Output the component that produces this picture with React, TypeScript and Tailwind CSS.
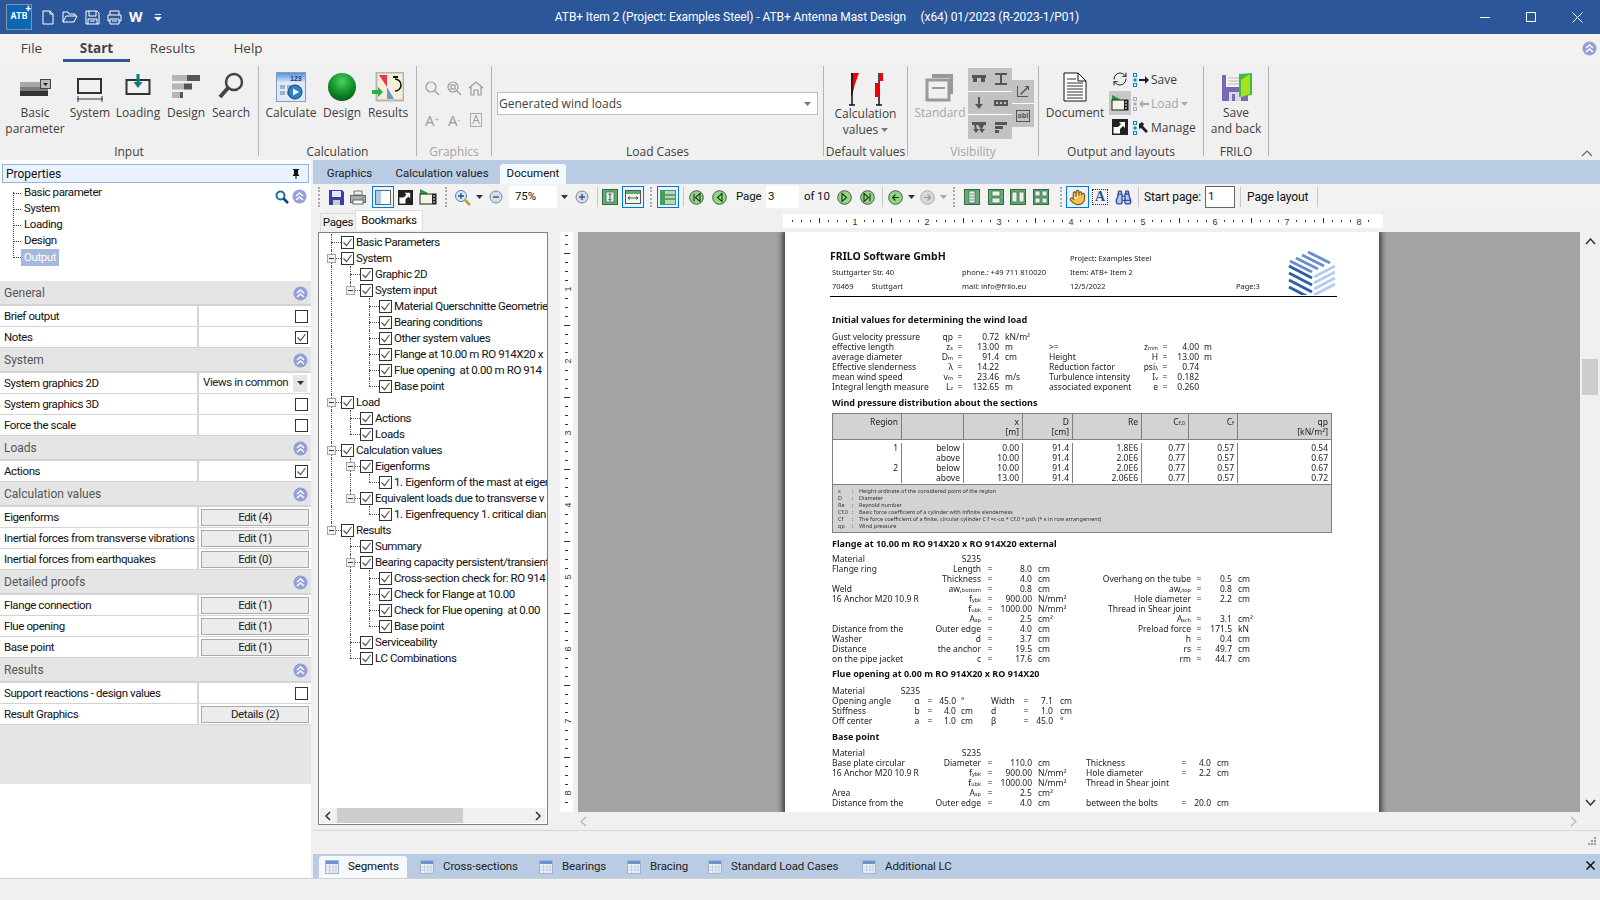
import type { ReactNode } from 'react'
import { Binoculars, Hand, RefreshCw } from 'lucide-react'

const ui = "font-['Roboto',sans-serif]"
const narrow = 'text-[11.5px] tracking-[-0.4px]'
const barText = 'text-[11.5px] tracking-[-0.1px]'

// ---------- small shared bits ----------

function Chevrons({ className = '' }: { className?: string }) {
  return (
    <svg width="15" height="15" viewBox="0 0 15 15" className={className}>
      <circle cx="7.5" cy="7.5" r="7" fill="#93a0d8" />
      <path d="M4 7l3.5-3L11 7M4 11l3.5-3L11 11" fill="none" stroke="#fff" strokeWidth="1.5" />
    </svg>
  )
}

function Check({ on = true }: { on?: boolean }) {
  return (
    <span className="flex h-[13px] w-[13px] shrink-0 items-center justify-center border border-[#333] bg-white">
      {on && (
        <svg width="11" height="11" viewBox="0 0 11 11">
          <path d="M1.5 5.5L4.5 8.5L9.5 2" fill="none" stroke="#555" strokeWidth="1.2" />
        </svg>
      )}
    </span>
  )
}

function Caret({ color = '#333' }: { color?: string }) {
  return (
    <svg width="7" height="4" viewBox="0 0 7 4">
      <path d="M0 0h7L3.5 4z" fill={color} />
    </svg>
  )
}

// ---------- ribbon icons ----------

function BasicIcon() {
  return (
    <svg width="31" height="18" viewBox="0 0 31 18" className="mb-[5px]">
      <rect x="0" y="3" width="28" height="5" fill="#a8a8a8" />
      <rect x="0" y="8" width="28" height="4" fill="#7c7c7c" />
      <rect x="0" y="12" width="28" height="5" fill="#333" />
      <rect x="20.500" y="0.500" width="10" height="9" fill="#bbb" stroke="#444" />
      <path d="M23 4h5l-2.500 3z" fill="#222" />
    </svg>
  )
}

function SystemIcon() {
  return (
    <svg width="28" height="26" viewBox="0 0 28 26">
      <rect x="2" y="3" width="23" height="14" fill="none" stroke="#333" strokeWidth="2" />
      <path d="M1 23h26M2 20v6M26 20v6" stroke="#333" fill="none" />
    </svg>
  )
}

function LoadingIcon() {
  return (
    <svg width="26" height="22" viewBox="0 0 26 22" className="mb-[7px]">
      <rect x="1.500" y="7" width="23" height="14" fill="none" stroke="#333" strokeWidth="2" />
      <path d="M11.500 1h3v8h3L13 15l-4.500-6h3z" fill="#0d7c7c" />
    </svg>
  )
}

function DesignBars() {
  return (
    <svg width="30" height="25" viewBox="0 0 30 25" className="mb-[3px]">
      <rect x="1" y="1" width="15" height="6" fill="#b5b5b5" />
      <rect x="16" y="1" width="13" height="6" fill="#555" />
      <rect x="1" y="9.500" width="12" height="6" fill="#b5b5b5" />
      <rect x="13" y="9.500" width="8" height="6" fill="#555" />
      <rect x="1" y="18" width="8" height="6" fill="#b5b5b5" />
      <rect x="9" y="18" width="3" height="6" fill="#555" />
    </svg>
  )
}

function SearchIcon() {
  return (
    <svg width="28" height="28" viewBox="0 0 28 28" className="mb-[2px]">
      <circle cx="17" cy="10" r="8" fill="none" stroke="#444" strokeWidth="2.500" />
      <path d="M11 16L3 25" stroke="#444" strokeWidth="4" />
    </svg>
  )
}

function CalcIcon() {
  return (
    <svg width="30" height="30" viewBox="0 0 30 30">
      <defs>
        <linearGradient id="calcTop" x1="0" x2="0" y1="0" y2="1">
          <stop offset="0" stopColor="#5a8fd8" />
          <stop offset="1" stopColor="#cfe2f8" />
        </linearGradient>
      </defs>
      <rect x="0.500" y="0.500" width="29" height="29" fill="#dfe9f6" stroke="#7f9fc9" />
      <rect x="1" y="1" width="28" height="9" fill="url(#calcTop)" />
      <text x="14" y="9" fontSize="7" fontFamily="Liberation Sans" fontWeight="700" fill="#1d3f7a">123</text>
      <path d="M4 13h5v4H4zM11 13h5v4h-5zM4 19h5v4H4zM11 19h5v4h-5z" fill="#9db0c6" />
      <path d="M18 13h5v3h-5z" fill="#e8b874" />
      <circle cx="19" cy="20" r="7" fill="#2f80c8" stroke="#123f7a" />
      <path d="M17 16.500l6 3.500-6 3.500z" fill="#fff" />
    </svg>
  )
}

function SphereIcon() {
  return (
    <svg width="30" height="30" viewBox="0 0 30 30">
      <defs>
        <radialGradient id="sphere" cx="0.500" cy="0.300" r="0.700">
          <stop offset="0" stopColor="#4fd05c" />
          <stop offset="0.600" stopColor="#12912a" />
          <stop offset="1" stopColor="#075f17" />
        </radialGradient>
      </defs>
      <circle cx="15" cy="15" r="14" fill="url(#sphere)" />
    </svg>
  )
}

function ResultsIcon() {
  return (
    <svg width="32" height="30" viewBox="0 0 32 30">
      <rect x="4.500" y="0.500" width="27" height="28" fill="#f5eed8" stroke="#b5b5b5" strokeWidth="2" />
      <path d="M7 3h8v12z" fill="#e8394a" />
      <path d="M15 15l7 12h-7z" fill="#6d97cc" />
      <path d="M23 7a6 6 0 0 1 0 12" fill="none" stroke="#111" strokeWidth="1.500" />
      <path d="M21 4h5v2h-5z" fill="#111" />
      <path d="M0 18h6v-3l5 5-5 5v-3H0z" fill="#27b14b" />
    </svg>
  )
}

function FlagsIcon() {
  return (
    <svg width="36" height="34" viewBox="0 0 36 34">
      <path d="M3 1h8L7 12 4 24H3z" fill="#f0000a" />
      <path d="M4 1v32M1 33h6M31 1v32M28 33h6" stroke="#111" strokeWidth="1.500" fill="none" />
      <rect x="31" y="1" width="4" height="8" fill="#f0000a" />
      <rect x="27" y="11" width="4" height="14" fill="#f0000a" />
    </svg>
  )
}

function StandardIcon() {
  return (
    <svg width="30" height="30" viewBox="0 0 30 30">
      <path d="M7 2h21v20h-3V6H7z" fill="#999" />
      <rect x="2" y="8" width="22" height="20" fill="none" stroke="#999" strokeWidth="3" />
      <path d="M7 16h13" stroke="#999" strokeWidth="2" />
    </svg>
  )
}

function DocumentIcon() {
  return (
    <svg width="24" height="30" viewBox="0 0 24 30">
      <path d="M1 1h14l8 8v20H1z" fill="#fff" stroke="#111" />
      <path d="M15 1v8h8" fill="none" stroke="#111" />
      <path d="M4 7h9M4 11h16M4 14h16M4 17h16M4 20h16M4 23h16M4 26h16" stroke="#333" />
    </svg>
  )
}

function SaveBackIcon() {
  return (
    <svg width="32" height="30" viewBox="0 0 32 30">
      <path d="M2 3h26v26H2z" fill="#7b68b5" />
      <rect x="6" y="3" width="18" height="12" fill="#f2f2f2" />
      <path d="M8 6h14M8 9h14M8 12h14" stroke="#bbb" />
      <rect x="9" y="20" width="12" height="9" fill="#d9d9d9" />
      <rect x="12" y="22" width="3" height="7" fill="#7b68b5" />
      <path d="M19 2l13-1v22l-13 2z" fill="#3dbb4a" />
      <path d="M21 8l9-6v20l-9 3z" fill="#a9e21c" />
    </svg>
  )
}

function MiniGray({ kind }: { kind: string }) {
  const paths: Record<string, ReactNode> = {
    zoom: (
      <>
        <circle cx="7" cy="7" r="5" fill="none" />
        <path d="M11 11l4 4" />
      </>
    ),
    zoomBox: (
      <>
        <circle cx="7" cy="7" r="5" fill="none" />
        <rect x="5" y="5" width="4" height="4" fill="none" />
        <path d="M11 11l4 4" />
      </>
    ),
    home: <path d="M1 8l7-6 7 6M3 7v8h3v-5h4v5h3V7" fill="none" />,
  }
  return (
    <svg width="16" height="16" viewBox="0 0 16 16" stroke="#9a9a9a" strokeWidth="1.200">
      {paths[kind]}
    </svg>
  )
}

function ArrowList({ dir }: { dir: 'save' | 'load' | 'manage' }) {
  const dim = dir === 'load'
  return (
    <svg width="16" height="14" viewBox="0 0 16 14">
      <rect x="0.500" y="0.500" width="3" height="3" fill="none" stroke={dim ? '#aaa' : '#1784c4'} />
      <rect x="0.500" y="5.500" width="3" height="3" fill={dim ? '#aaa' : '#1784c4'} />
      <rect x="0.500" y="10.500" width="3" height="3" fill="none" stroke={dim ? '#aaa' : '#1784c4'} />
      {dir === 'save' && <path d="M6 6h6V3l4 4-4 4V8H6z" fill="#222" />}
      {dir === 'load' && <path d="M16 6h-6V3L6 7l4 4V8h6z" fill="#aaa" />}
      {dir === 'manage' && <path d="M6 3l3-2 2 2-1 2 5 5-2 2-5-5-2 1z" fill="#222" />}
    </svg>
  )
}

function ExpandBox({ size = 16 }: { size?: number }) {
  return (
    <svg width={size} height={size} viewBox="0 0 16 16">
      <rect width="16" height="16" fill="#222" />
      <rect x="1.500" y="8" width="6.500" height="6.500" fill="#fff" />
      <path d="M7 3h6v6l-2-2-3 3-2-2 3-3z" fill="#fff" />
    </svg>
  )
}

function FilmIcon() {
  return (
    <svg width="18" height="16" viewBox="0 0 18 16">
      <path d="M1 0l8 4-8 4z" fill="#1d9a3c" />
      <rect x="1" y="5" width="16" height="10" fill="#f4f4e4" stroke="#222" />
      <rect x="13" y="5" width="4" height="10" fill="#222" />
      <path d="M14 7h2M14 10h2M14 13h2" stroke="#fff" />
    </svg>
  )
}

function VisIcon({ d }: { d: string }) {
  return (
    <svg width="16" height="14" viewBox="0 0 16 14">
      <path d={d} fill="#555" />
    </svg>
  )
}

// ---------- ribbon ----------

function BigBtn({ icon, label, className, dim }: { icon: ReactNode; label: ReactNode; className: string; dim?: boolean }) {
  return (
    <div className={`flex flex-col items-center ${className}`}>
      <div className="flex h-[32px] shrink-0 items-end justify-center">{icon}</div>
      <div className={`mt-[3px] shrink-0 text-center text-[12px] leading-[16px] ${dim ? 'text-[#a6a6a6]' : 'text-[#404040]'}`}>{label}</div>
    </div>
  )
}

function Group({ title, className, children, dim }: { title: string; className: string; children: ReactNode; dim?: boolean }) {
  return (
    <div className={`flex h-full shrink-0 flex-col border-r border-[#b5b5b5] ${className}`}>
      <div className="flex min-h-0 flex-1 pt-[4px]">{children}</div>
      <div className={`h-[10px] shrink-0 text-center text-[12px] leading-[12px] whitespace-nowrap ${dim ? 'text-[#a6a6a6]' : 'text-[#404040]'}`}>{title}</div>
    </div>
  )
}

function Ribbon() {
  return (
    <div className="relative flex h-[98px] shrink-0 items-stretch bg-[#f0f0f0] pt-[4px] pb-[4px] font-['Open_Sans',sans-serif]">
      <Group title="Input" className="w-[259px]">
        <BigBtn className="w-[70px]" icon={<BasicIcon />} label={<>Basic<br />parameter</>} />
        <BigBtn className="w-[40px]" icon={<SystemIcon />} label="System" />
        <BigBtn className="w-[56px]" icon={<LoadingIcon />} label="Loading" />
        <BigBtn className="w-[40px]" icon={<DesignBars />} label="Design" />
        <BigBtn className="w-[50px]" icon={<SearchIcon />} label="Search" />
      </Group>
      <Group title="Calculation" className="w-[158px]">
        <BigBtn className="w-[64px]" icon={<CalcIcon />} label="Calculate" />
        <BigBtn className="w-[38px]" icon={<SphereIcon />} label="Design" />
        <BigBtn className="w-[54px]" icon={<ResultsIcon />} label="Results" />
      </Group>
      <Group title="Graphics" dim className="w-[75px]">
        <div className="mx-auto mt-[2px] grid h-[64px] w-[66px] grid-cols-3 items-center justify-items-center text-[15px] leading-none text-[#9a9a9a]">
          <MiniGray kind="zoom" />
          <MiniGray kind="zoomBox" />
          <MiniGray kind="home" />
          <span>A<sup className="text-[8px]">+</sup></span>
          <span>A<sup className="text-[8px]">-</sup></span>
          <span className="border border-[#aaa] px-[1px] text-[12px]">A</span>
        </div>
      </Group>
      <Group title="Load Cases" className="w-[332px]">
        <div className="mx-[5px] mt-[22px] flex h-[23px] w-[321px] items-center justify-between border border-[#bdbdbd] bg-white pr-[6px] pl-[1px] text-[12px] text-[#404040]">
          Generated wind loads
          <Caret color="#777" />
        </div>
      </Group>
      <Group title="Default values" className="w-[84px]">
        <div className="flex w-full flex-col items-center">
          <div className="flex h-[36px] shrink-0 items-start pt-[2px]">
            <FlagsIcon />
          </div>
          <div className="shrink-0 text-center text-[12px] leading-[16px] text-[#404040]">
            Calculation
            <br />
            <span className="inline-flex items-center gap-[3px]">
              values <Caret color="#777" />
            </span>
          </div>
        </div>
      </Group>
      <Group title="Visibility" dim className="w-[131px]">
        <BigBtn className="ml-[4px] w-[56px]" dim icon={<StandardIcon />} label="Standard" />
        <div className="-mt-[2px] flex items-start">
          <div className="grid h-[71px] w-[44px] grid-cols-2 grid-rows-3 divide-y divide-white bg-[#c2c2c2]">
            <div className="col-span-2 flex items-center justify-around">
              <VisIcon d="M1 3h14v3H1zM2 6h4v4H2zM10 6h4v4h-4z" />
              <VisIcon d="M2 1h12v2h-5v8h5v2H2v-2h5V3H2z" />
            </div>
            <div className="col-span-2 flex items-center justify-around">
              <VisIcon d="M7 1h2v7h3l-4 5-4-5h3z" />
              <VisIcon d="M1 4h14v6H1zM3 6v2h2V6zM7 6v2h2V6zM11 6v2h2V6z" />
            </div>
            <div className="col-span-2 flex items-center justify-around">
              <VisIcon d="M1 2h14v3h-2l-2 4 3 0-3 4-3-4h2L7 5H5l1 4h2l-3 4-3-4h2L3 5H1z" />
              <VisIcon d="M2 2h12v3H2zM2 6h8v3H2zM2 10h4v3H2z" />
            </div>
          </div>
          <div className="mt-[12px] flex h-[47px] w-[22px] flex-col divide-y divide-white bg-[#c2c2c2]">
            <div className="flex flex-1 items-center justify-center">
              <VisIcon d="M2 1h1v10h10v1H2zM5 9l8-8 1 1-8 8zM10 1h4v4h-1V2h-3z" />
            </div>
            <div className="flex flex-1 items-center justify-center">
              <span className="border border-[#555] px-[1px] text-[7px] leading-[10px] font-bold text-[#555]">abl</span>
            </div>
          </div>
        </div>
      </Group>
      <Group title="Output and layouts" className="w-[165px]">
        <BigBtn className="ml-[2px] w-[68px]" icon={<DocumentIcon />} label="Document" />
        <div className="-mt-[3px] flex w-[22px] flex-col items-center">
          <div className="flex h-[24px] items-center justify-center">
            <RefreshCw size={16} color="#222" strokeWidth={1.5} />
          </div>
          <div className="flex h-[24px] w-[22px] items-center justify-center bg-[#c8c8c8]">
            <FilmIcon />
          </div>
          <div className="flex h-[24px] items-center justify-center">
            <ExpandBox />
          </div>
        </div>
        <div className="-mt-[2px] ml-[2px] flex flex-col text-[12px] text-[#404040]">
          <div className="flex h-[24px] items-center gap-[2px]">
            <ArrowList dir="save" /> Save
          </div>
          <div className="flex h-[24px] items-center gap-[2px] text-[#a6a6a6]">
            <ArrowList dir="load" /> Load <Caret color="#aaa" />
          </div>
          <div className="flex h-[24px] items-center gap-[2px]">
            <ArrowList dir="manage" /> Manage
          </div>
        </div>
      </Group>
      <Group title="FRILO" className="w-[65px]">
        <BigBtn className="w-full" icon={<SaveBackIcon />} label={<>Save<br />and back</>} />
      </Group>
      <svg width="12" height="7" viewBox="0 0 12 7" className="absolute right-[7px] bottom-[3px]">
        <path d="M1 6l5-5 5 5" fill="none" stroke="#666" strokeWidth="1.200" />
      </svg>
    </div>
  )
}

// ---------- title and menu ----------

function TitleBar() {
  return (
    <div className="flex h-[34px] shrink-0 items-center bg-[#2b579a] text-white">
      <div className="flex w-[164px] shrink-0 items-center">
        <div className="relative ml-[6px] flex h-[26px] w-[26px] items-start justify-center border border-[#8a9099] bg-[#0b66b5] pt-[7px] font-['Roboto',sans-serif] text-[9px] leading-none font-bold">
          ATB
          <span className="absolute top-[-1px] right-[0px] text-[10px] leading-none">+</span>
        </div>
        <svg width="12" height="15" viewBox="0 0 12 15" className="ml-[10px]" fill="none" stroke="#fff">
          <path d="M1 1h7l3 3v10H1zM8 1v3h3" />
        </svg>
        <svg width="16" height="12" viewBox="0 0 16 12" className="ml-[8px]" fill="none" stroke="#fff">
          <path d="M1 11V1h5l1 2h6v2M1 11l3-6h11l-3 6z" />
        </svg>
        <svg width="15" height="15" viewBox="0 0 15 15" className="ml-[7px]" fill="none" stroke="#fff">
          <path d="M1 1h11l2 2v11H1zM4 1v5h7V1M3 14V9h9v5M5 11h5" />
        </svg>
        <svg width="15" height="15" viewBox="0 0 15 15" className="ml-[7px]" fill="none" stroke="#fff">
          <path d="M3 5V1h9v4M3 11H1V5h13v6h-2M3 9h9v5H3zM5 11h5" />
        </svg>
        <span className="ml-[7px] font-['Open_Sans',sans-serif] text-[14px] leading-none font-bold">W</span>
        <svg width="8" height="7" viewBox="0 0 8 7" className="ml-[11px]" fill="#fff">
          <path d="M1 0h6v1H1zM0 3h8L4 7z" />
        </svg>
      </div>
      <div className="min-w-0 flex-1 pl-[8px] text-center font-['Roboto',sans-serif] text-[12px] tracking-[-0.09px] whitespace-pre">
        ATB+ Item 2 (Project: Examples Steel) - ATB+ Antenna Mast Design     (x64) 01/2023 (R-2023-1/P01)
      </div>
      <div className="flex w-[138px] shrink-0 items-center text-white">
        <div className="flex w-[46px] justify-center">
          <span className="h-px w-[10px] bg-white" />
        </div>
        <div className="flex w-[46px] justify-center">
          <span className="h-[10px] w-[10px] border border-white" />
        </div>
        <div className="flex w-[46px] justify-center">
          <svg width="11" height="11" viewBox="0 0 11 11">
            <path d="M0.500 0.500l10 10M10.500 0.500l-10 10" stroke="#fff" />
          </svg>
        </div>
      </div>
    </div>
  )
}

function MenuBar() {
  return (
    <div className="flex h-[28px] shrink-0 items-center bg-[#f3f2f1] font-['Open_Sans',sans-serif] text-[13.5px] text-[#444]">
      <div className="flex h-full w-[63px] items-center justify-center">File</div>
      <div className="flex h-full w-[67px] items-center justify-center border-b-[3px] border-[#2b579a] pt-[3px] font-bold text-[#444]">Start</div>
      <div className="flex h-full w-[85px] items-center justify-center">Results</div>
      <div className="flex h-full w-[66px] items-center justify-center">Help</div>
      <Chevrons className="mr-[3px] ml-auto" />
    </div>
  )
}

// ---------- left property panel ----------

function PropHeader({ title }: { title: string }) {
  return (
    <div className="flex h-[25px] items-center justify-between border-b-2 border-[#d4d4d4] bg-[#e5e5e5] pt-[1px] pr-[3px] pl-[4px] text-[12px] text-[#555]">
      {title}
      <Chevrons />
    </div>
  )
}

function PropRow({ label, children }: { label: string; children?: ReactNode }) {
  return (
    <div className="flex h-[21px] border-b border-[#d4d4d4] bg-white text-[#111]">
      <div className={`flex w-[199px] shrink-0 items-center overflow-hidden border-r-2 border-[#d4d4d4] pt-[1px] pl-[4px] whitespace-nowrap ${narrow}`}>{label}</div>
      <div className="flex min-w-0 flex-1 items-center justify-end">{children}</div>
    </div>
  )
}

function EditBtn({ label }: { label: string }) {
  return (
    <div className={`mr-[2px] flex h-[17px] w-[108px] items-center justify-center border border-[#a9a9a9] bg-[#ececec] pt-[1px] text-[#222] ${narrow}`}>{label}</div>
  )
}

function CheckCell({ on }: { on?: boolean }) {
  return (
    <div className="mr-[3px]">
      <Check on={!!on} />
    </div>
  )
}

function PropertiesPanel() {
  const nav = ['Basic parameter', 'System', 'Loading', 'Design', 'Output']
  return (
    <div className={`flex w-[311px] shrink-0 flex-col bg-white ${ui}`}>
      <div className="px-[2px] pt-[4px]">
        <div className="flex h-[19px] items-center justify-between border border-[#8fb4e0] bg-[#eaf3fd] pr-[8px] pl-[3px] text-[12px] text-[#111]">
          Properties
          <svg width="8" height="10" viewBox="0 0 8 10">
            <path d="M1 0h6v1H6v4l1 1v1H4.500v3h-1V7H1V6l1-1V1H1z" fill="#111" />
          </svg>
        </div>
      </div>
      <div className={`relative h-[98px] pt-[2px] text-[#111] ${narrow}`}>
        <div className="absolute top-[9px] left-[13px] h-[66px] border-l border-dotted border-[#444]" />
        {nav.map((n) => (
          <div key={n} className="flex h-[16px] items-center pl-[13px]">
            <span className="w-[8px] border-t border-dotted border-[#444]" />
            {n === 'Output' ? (
              <span className="bg-[#a5b8dc] px-[3px] leading-[17px] text-white">{n}</span>
            ) : (
              <span className="pl-[3px]">{n}</span>
            )}
          </div>
        ))}
        <div className="absolute top-[6px] right-[4px] flex items-center gap-[3px]">
          <svg width="14" height="14" viewBox="0 0 14 14">
            <circle cx="5.500" cy="5.500" r="4" fill="none" stroke="#1e6fa8" strokeWidth="2" />
            <path d="M8.500 8.500L13 13" stroke="#143f70" strokeWidth="2.500" />
          </svg>
          <Chevrons />
        </div>
      </div>
      <PropHeader title="General" />
      <PropRow label="Brief output"><CheckCell /></PropRow>
      <PropRow label="Notes"><CheckCell on /></PropRow>
      <PropHeader title="System" />
      <PropRow label="System graphics 2D">
        <div className={`flex h-full w-full items-center justify-between pr-[4px] pl-[4px] whitespace-nowrap text-[#222] ${narrow}`}>
          Views in common
          <span className="flex h-[17px] w-[14px] items-center justify-center bg-[#e5e5e5]"><Caret /></span>
        </div>
      </PropRow>
      <PropRow label="System graphics 3D"><CheckCell /></PropRow>
      <PropRow label="Force the scale"><CheckCell /></PropRow>
      <PropHeader title="Loads" />
      <PropRow label="Actions"><CheckCell on /></PropRow>
      <PropHeader title="Calculation values" />
      <PropRow label="Eigenforms"><EditBtn label="Edit (4)" /></PropRow>
      <PropRow label="Inertial forces from transverse vibrations"><EditBtn label="Edit (1)" /></PropRow>
      <PropRow label="Inertial forces from earthquakes"><EditBtn label="Edit (0)" /></PropRow>
      <PropHeader title="Detailed proofs" />
      <PropRow label="Flange connection"><EditBtn label="Edit (1)" /></PropRow>
      <PropRow label="Flue opening"><EditBtn label="Edit (1)" /></PropRow>
      <PropRow label="Base point"><EditBtn label="Edit (1)" /></PropRow>
      <PropHeader title="Results" />
      <PropRow label="Support reactions - design values"><CheckCell /></PropRow>
      <PropRow label="Result Graphics"><EditBtn label="Details (2)" /></PropRow>
      <div className="h-[59px] bg-[#e5e5e5]" />
      <div className="flex-1 bg-white" />
    </div>
  )
}

// ---------- bookmark tree ----------

type Node = { t: string; kids?: Node[] }

const bookmarks: Node[] = [
  { t: 'Basic Parameters' },
  {
    t: 'System',
    kids: [
      { t: 'Graphic 2D' },
      {
        t: 'System input',
        kids: [
          { t: 'Material Querschnitte Geometrie' },
          { t: 'Bearing conditions' },
          { t: 'Other system values' },
          { t: 'Flange at 10.00 m RO 914X20 x' },
          { t: 'Flue opening  at 0.00 m RO 914' },
          { t: 'Base point' },
        ],
      },
    ],
  },
  { t: 'Load', kids: [{ t: 'Actions' }, { t: 'Loads' }] },
  {
    t: 'Calculation values',
    kids: [
      { t: 'Eigenforms', kids: [{ t: '1. Eigenform of the mast at eiger' }] },
      { t: 'Equivalent loads due to transverse v', kids: [{ t: '1. Eigenfrequency 1. critical dian' }] },
    ],
  },
  {
    t: 'Results',
    kids: [
      { t: 'Summary' },
      {
        t: 'Bearing capacity persistent/transient',
        kids: [
          { t: 'Cross-section check for: RO 914' },
          { t: 'Check for Flange at 10.00' },
          { t: 'Check for Flue opening  at 0.00' },
          { t: 'Base point' },
        ],
      },
      { t: 'Serviceability' },
      { t: 'LC Combinations' },
    ],
  },
]

type Flat = { t: string; rails: boolean[]; last: boolean; hasKids: boolean }

function flatten(list: Node[], rails: boolean[] = []): Flat[] {
  return list.flatMap((n, i) => {
    const last = i === list.length - 1
    return [{ t: n.t, rails, last, hasKids: !!n.kids }, ...flatten(n.kids ?? [], [...rails, !last])]
  })
}

function TreeRow({ row }: { row: Flat }) {
  return (
    <div className={`flex h-[16px] items-center whitespace-pre text-[#111] ${narrow}`}>
      {row.rails.map((on, i) => (
        <span key={i} className="flex h-full w-[19px] shrink-0 justify-center">
          {on && <span className="h-full border-l border-dotted border-[#555]" />}
        </span>
      ))}
      <span className="relative h-full w-[19px] shrink-0">
        <span className={`absolute top-0 left-[9px] border-l border-dotted border-[#555] ${row.last ? 'h-[8px]' : 'h-full'}`} />
        <span className="absolute top-[8px] left-[9px] w-[10px] border-t border-dotted border-[#555]" />
        {row.hasKids && (
          <span className="absolute top-[4px] left-[5px] flex h-[9px] w-[9px] items-center justify-center border border-[#9aa5b5] bg-[#eef2f7]">
            <span className="h-px w-[5px] bg-[#334]" />
          </span>
        )}
      </span>
      <Check />
      <span className="pt-[1px] pl-[2px]">{row.t}</span>
    </div>
  )
}

function BookmarksPanel() {
  const rows = flatten(bookmarks)
  return (
    <div className={`flex w-[240px] shrink-0 flex-col ${ui}`}>
      <div className="flex h-[22px] items-start pl-[7px] text-[11.5px] tracking-[-0.3px] text-[#111]">
        <div className="mt-[3px] flex h-[19px] w-[35px] items-center justify-center border-t border-l border-[#ddd]">Pages</div>
        <div className="flex h-[20px] w-[68px] items-center justify-center border-x border-t border-[#ddd] bg-white">Bookmarks</div>
      </div>
      <div className="ml-[5px] flex h-[593px] w-[230px] flex-col border border-[#808080] bg-white">
        <div className="min-h-0 flex-1 overflow-hidden pt-[1px] pl-[3px]">
          {rows.map((r, i) => (
            <TreeRow key={i} row={r} />
          ))}
        </div>
        <div className="mx-[1px] mb-[1px] flex h-[15px] items-center bg-[#f0f0f0] text-[#333]">
          <svg width="17" height="10" viewBox="0 0 17 10">
            <path d="M10 1L6 5l4 4" fill="none" stroke="#333" strokeWidth="1.500" />
          </svg>
          <div className="h-full w-[126px] bg-[#cdcdcd]" />
          <svg width="17" height="10" viewBox="0 0 17 10" className="ml-auto">
            <path d="M7 1l4 4-4 4" fill="none" stroke="#333" strokeWidth="1.500" />
          </svg>
        </div>
      </div>
    </div>
  )
}

// ---------- document page ----------

const sub = (a: string, b: string) => (
  <>
    {a}
    <span className="text-[5.500px]">{b}</span>
  </>
)

type Cells = ReactNode[]

const initialRows: Cells[] = [
  ['Gust velocity pressure', 'qp', '=', '0.72', 'kN/m²'],
  ['effective length', sub('z', 's'), '=', '13.00', 'm', '>=', sub('z', 'min'), '=', '4.00', 'm'],
  ['average diameter', sub('D', 'm'), '=', '91.4', 'cm', 'Height', 'H', '=', '13.00', 'm'],
  ['Effective slenderness', 'λ', '=', '14.22', '', 'Reduction factor', sub('psi', 'λ'), '=', '0.74', ''],
  ['mean wind speed', sub('v', 'm'), '=', '23.46', 'm/s', 'Turbulence intensity', sub('I', 'v'), '=', '0.182', ''],
  ['Integral length measure', sub('L', 'z'), '=', '132.65', 'm', 'associated exponent', 'e', '=', '0.260', ''],
]

const flangeRows: Cells[] = [
  ['Material', 'S235'],
  ['Flange ring', 'Length', '=', '8.0', 'cm'],
  ['', 'Thickness', '=', '4.0', 'cm', 'Overhang on the tube', '=', '0.5', 'cm'],
  ['Weld', sub('aw,', 'bottom'), '=', '0.8', 'cm', sub('aw,', 'top'), '=', '0.8', 'cm'],
  ['16 Anchor M20 10.9 R', sub('f', 'ybk'), '=', '900.00', 'N/mm²', 'Hole diameter', '=', '2.2', 'cm'],
  ['', sub('f', 'ubk'), '=', '1000.00', 'N/mm²', 'Thread in Shear joint'],
  ['', sub('A', 'sp'), '=', '2.5', 'cm²', sub('A', 'sch'), '=', '3.1', 'cm²'],
  ['Distance from the', 'Outer edge', '=', '4.0', 'cm', 'Preload force', '=', '171.5', 'kN'],
  ['Washer', 'd', '=', '3.7', 'cm', 'h', '=', '0.4', 'cm'],
  ['Distance', 'the anchor', '=', '19.5', 'cm', 'rs', '=', '49.7', 'cm'],
  ['on the pipe jacket', 'c', '=', '17.6', 'cm', 'rm', '=', '44.7', 'cm'],
]

const flueRows: Cells[] = [
  ['Opening angle', 'α', '=', '45.0', '°', 'Width', '=', '7.1', 'cm'],
  ['Stiffness', 'b', '=', '4.0', 'cm', 'd', '=', '1.0', 'cm'],
  ['Off center', 'a', '=', '1.0', 'cm', 'β', '=', '45.0', '°'],
]

const baseRows: Cells[] = [
  ['Material', 'S235'],
  ['Base plate circular', 'Diameter', '=', '110.0', 'cm', 'Thickness', '=', '4.0', 'cm'],
  ['16 Anchor M20 10.9 R', sub('f', 'ybk'), '=', '900.00', 'N/mm²', 'Hole diameter', '=', '2.2', 'cm'],
  ['', sub('f', 'ubk'), '=', '1000.00', 'N/mm²', 'Thread in Shear joint'],
  ['Area', sub('A', 'sp'), '=', '2.5', 'cm²'],
  ['Distance from the', 'Outer edge', '=', '4.0', 'cm', 'between the bolts', '=', '20.0', 'cm'],
]

function H({ children, className }: { children: ReactNode; className: string }) {
  return <div className={`text-[9px] leading-[10px] font-bold text-[#111] ${className}`}>{children}</div>
}

function InitialRow({ c }: { c: Cells }) {
  return (
    <div className="grid h-[10px] grid-cols-[96px_25px_14px_32px_50px_81px_28px_14px_27px_40px] whitespace-nowrap">
      <span>{c[0]}</span>
      <span className="text-right">{c[1]}</span>
      <span className="text-center">{c[2]}</span>
      <span className="text-right">{c[3]}</span>
      <span className="pl-[6px]">{c[4]}</span>
      <span>{c[5]}</span>
      <span className="text-right">{c[6]}</span>
      <span className="text-center">{c[7]}</span>
      <span className="text-right">{c[8]}</span>
      <span className="pl-[5px]">{c[9]}</span>
    </div>
  )
}

function FlangeRow({ c, base }: { c: Cells; base?: boolean }) {
  if (c.length === 2) {
    return (
      <div className="grid h-[10px] grid-cols-[100px_49px] whitespace-nowrap">
        <span>{c[0]}</span>
        <span className="text-right">{c[1]}</span>
      </div>
    )
  }
  return (
    <div className={`grid h-[10px] whitespace-nowrap ${base ? 'grid-cols-[100px_49px_18px_33px_54px_90px_16px_19px_40px]' : 'grid-cols-[100px_49px_18px_33px_63px_96px_16px_25px_40px]'}`}>
      <span>{c[0]}</span>
      <span className="text-right">{c[1]}</span>
      <span className="text-center">{c[2]}</span>
      <span className="text-right">{c[3]}</span>
      <span className="pl-[6px]">{c[4]}</span>
      <span className={base ? '' : 'text-right'}>{c[5]}</span>
      <span className="text-center">{c[6]}</span>
      <span className="text-right">{c[7]}</span>
      <span className="pl-[6px]">{c[8]}</span>
    </div>
  )
}

function FlueRow({ c }: { c: Cells }) {
  return (
    <div className="grid h-[10px] grid-cols-[78px_14px_12px_20px_35px_27px_16px_19px_30px] whitespace-nowrap">
      <span>{c[0]}</span>
      <span className="text-center">{c[1]}</span>
      <span className="text-center">{c[2]}</span>
      <span className="text-right">{c[3]}</span>
      <span className="pl-[5px]">{c[4]}</span>
      <span>{c[5]}</span>
      <span className="text-center">{c[6]}</span>
      <span className="text-right">{c[7]}</span>
      <span className="pl-[7px]">{c[8]}</span>
    </div>
  )
}

const tableCols = 'grid grid-cols-[69px_62px_59px_50px_69px_47px_49px_1fr]'

const tableRows = [
  ['1', 'below', '0.00', '91.4', '1.8E6', '0.77', '0.57', '0.54'],
  ['', 'above', '10.00', '91.4', '2.0E6', '0.77', '0.57', '0.67'],
  ['2', 'below', '10.00', '91.4', '2.0E6', '0.77', '0.57', '0.67'],
  ['', 'above', '13.00', '91.4', '2.06E6', '0.77', '0.57', '0.72'],
]

const legend = [
  ['x', 'Height ordinate of the considered point of the region'],
  ['D', 'Diameter'],
  ['Re', 'Reynold number'],
  ['Cf,0', 'Basic force coefficient of a cylinder with infinite slenderness'],
  ['Cf', 'The force coefficient of a finite, circular cylinder C f =c-cα * Cf,0 * psiλ (* κ in row arrangement)'],
  ['qp', 'Wind pressure'],
]

function PressureTable() {
  const head: ReactNode[] = ['Region', '', <>x<br />[m]</>, <>D<br />[cm]</>, 'Re', sub('C', 'f,0'), sub('C', 'f'), <>qp<br />[kN/m²]</>]
  return (
    <div className="mt-[5px] w-[500px] border border-[#808080]">
      <div className={`${tableCols} h-[26px] divide-x divide-[#808080] border-b border-[#808080] bg-[#d3d3d3] text-right`}>
        {head.map((h, i) => (
          <div key={i} className="pt-[3px] pr-[3px]">{h}</div>
        ))}
      </div>
      <div className={`${tableCols} h-[45px] divide-x divide-[#808080] border-b border-[#808080] bg-white py-[3px] text-right`}>
        {[0, 1, 2, 3, 4, 5, 6, 7].map((col) => (
          <div key={col} className="pr-[3px]">
            {tableRows.map((r, i) => (
              <div key={i} className="h-[10px]">{r[col]}</div>
            ))}
          </div>
        ))}
      </div>
      <div className="h-[47px] bg-[#d3d3d3] pt-[3px] pl-[5px] text-[5.500px] leading-[7px] text-[#333]">
        {legend.map(([a, b]) => (
          <div key={a} className="flex">
            <span className="w-[14px]">{a}</span>
            <span className="w-[7px]">:</span>
            <span>{b}</span>
          </div>
        ))}
      </div>
    </div>
  )
}

function FriloLogo() {
  const rows = [0, 1, 2, 3]
  return (
    <svg width="48" height="47" viewBox="0 0 48 47">
      {rows.map((i) => (
        <path key={`t${i}`} d={`M${2 + i * 6} ${13 - i * 3}L${24 + i * 6} ${24 - i * 3}`} stroke="#6f8dcb" strokeWidth="3" />
      ))}
      {rows.map((i) => (
        <path key={`l${i}`} d={`M1 ${18 + i * 7}L24 ${30 + i * 7}`} stroke="#2f5ea8" strokeWidth="3" />
      ))}
      {rows.map((i) => (
        <path key={`r${i}`} d={`M26 ${29 + i * 6}L47 ${18 + i * 6}`} stroke="#b4ccf0" strokeWidth="3" />
      ))}
    </svg>
  )
}

function DocPage() {
  return (
    <div className="ml-[207px] h-[640px] w-[594px] shrink-0 bg-white pl-[45px] font-['Noto_Sans',sans-serif] text-[8.500px] leading-[10px] text-[#222] shadow-[0_0_6px_2px_rgba(0,0,0,0.75)] blur-[0.25px]">
      <div className="flex h-[65px] w-[507px] items-end border-b border-black pb-[1px]">
        <div className="relative grid w-[455px] grid-cols-[132px_108px_166px_1fr] grid-rows-[14px_14px_14px] pb-[2px] text-[7.500px] leading-[14px]">
          <div className="text-[10.500px] leading-[10px] font-bold text-[#111]">FRILO Software GmbH</div>
          <div />
          <div>Project: Examples Steel</div>
          <div />
          <div className="pl-[2px]">Stuttgarter Str. 40</div>
          <div>phone.: +49 711 810020</div>
          <div>Item: ATB+ Item 2</div>
          <div />
          <div className="flex gap-[18px] pl-[2px]"><span>70469</span><span>Stuttgart</span></div>
          <div>mail: info@frilo.eu</div>
          <div>12/5/2022</div>
          <div>Page:3</div>
        </div>
        <div className="ml-[3px]">
          <FriloLogo />
        </div>
      </div>
      <div className="w-[520px] pl-[2px]">
        <H className="mt-[18px]">Initial values for determining the wind load</H>
        <div className="mt-[7px]">
          {initialRows.map((r, i) => (
            <InitialRow key={i} c={r} />
          ))}
        </div>
        <H className="mt-[6px]">Wind pressure distribution about the sections</H>
        <PressureTable />
        <H className="mt-[6px]">Flange at 10.00 m RO 914X20 x RO 914X20 external</H>
        <div className="mt-[5px]">
          {flangeRows.map((r, i) => (
            <FlangeRow key={i} c={r} />
          ))}
        </div>
        <H className="mt-[5px]">Flue opening  at 0.00 m RO 914X20 x RO 914X20</H>
        <div className="mt-[7px]">
          <div className="grid h-[10px] grid-cols-[68px_20px]">
            <span>Material</span>
            <span className="text-right">S235</span>
          </div>
          {flueRows.map((r, i) => (
            <FlueRow key={i} c={r} />
          ))}
        </div>
        <H className="mt-[6px]">Base point</H>
        <div className="mt-[6px]">
          {baseRows.map((r, i) => (
            <FlangeRow key={i} c={r} base />
          ))}
        </div>
      </div>
    </div>
  )
}

// ---------- rulers ----------

function HRuler() {
  const ticks = Array.from({ length: 66 }, (_, i) => i)
  return (
    <svg width="600" height="14" viewBox="0 0 600 14" className="block">
      <rect width="600" height="14" fill="#fff" />
      {ticks.map((i) =>
        i % 8 === 0 ? null : (
          <rect key={i} x={i * 9} y={i % 4 === 0 ? 4 : 6} width="1" height={i % 4 === 0 ? 5 : 2} fill="#333" />
        ),
      )}
      {[1, 2, 3, 4, 5, 6, 7, 8].map((n) => (
        <text key={n} x={n * 72} y="10.500" textAnchor="middle" fontSize="9" fontFamily="Liberation Sans" fill="#333">{n}</text>
      ))}
    </svg>
  )
}

function VRuler() {
  const ticks = Array.from({ length: 66 }, (_, i) => i)
  return (
    <svg width="18" height="580" viewBox="0 0 18 580" className="block shrink-0">
      <rect width="13" height="580" fill="#fff" />
      <rect x="13" width="5" height="580" fill="#f0f0f0" />
      {ticks.map((i) =>
        i % 8 === 0 ? null : (
          <rect key={i} x={i % 4 === 0 ? 4 : 5} y={i * 9 - 15} width={i % 4 === 0 ? 6 : 3} height="1" fill="#333" />
        ),
      )}
      {[1, 2, 3, 4, 5, 6, 7, 8].map((n) => (
        <text key={n} x="9" y={n * 72 - 15} textAnchor="middle" fontSize="9" fontFamily="Liberation Sans" fill="#333" transform={`rotate(-90 9 ${n * 72 - 15})`} dominantBaseline="middle">{n}</text>
      ))}
    </svg>
  )
}

// ---------- document toolbar ----------

function Grip({ className = '' }: { className?: string }) {
  return <span className={`h-[20px] w-[2px] shrink-0 border-l-2 border-dotted border-[#aaa] ${className}`} />
}

function Sep({ className = '' }: { className?: string }) {
  return <span className={`h-[20px] w-px shrink-0 bg-[#c8c8c8] ${className}`} />
}

function Tb({ className, children, active }: { className: string; children?: ReactNode; active?: boolean }) {
  return (
    <span className={`flex h-[22px] shrink-0 items-center justify-center ${active ? 'border border-[#0078d7] bg-[#e8f2fb]' : ''} ${className}`}>{children}</span>
  )
}

function NavBall({ d, dim }: { d: string; dim?: boolean }) {
  return (
    <svg width="15" height="15" viewBox="0 0 15 15">
      <circle cx="7.500" cy="7.500" r="6.800" fill={dim ? '#d8d8d8' : '#9cd08a'} stroke={dim ? '#aaa' : '#2f6b2f'} />
      <path d={d} fill="none" stroke={dim ? '#999' : '#123f12'} strokeWidth="1.100" />
    </svg>
  )
}

function PageIcon({ d }: { d: string }) {
  return (
    <svg width="16" height="16" viewBox="0 0 16 16">
      <rect x="0.500" y="0.500" width="15" height="15" fill="#6aa878" stroke="#2f6b3c" />
      <path d={d} fill="#e6f2e8" stroke="#2f6b3c" strokeWidth="0.700" />
    </svg>
  )
}

function DocToolbar() {
  return (
    <div className={`flex h-[26px] shrink-0 items-center bg-[#f2f2f2] pl-[3px] text-[#111] ${barText} ${ui}`}>
      <Grip className="mx-[2px]" />
      <Tb className="w-[28px]">
        <svg width="15" height="15" viewBox="0 0 15 15">
          <path d="M0 0h13l2 2v13H0z" fill="#3a3fa8" />
          <rect x="3" y="1" width="9" height="6" fill="#dfe6f5" />
          <rect x="4" y="10" width="7" height="5" fill="#ccc" />
        </svg>
      </Tb>
      <Tb className="w-[16px]">
        <svg width="16" height="15" viewBox="0 0 16 15">
          <path d="M4 5V1h8v4z" fill="#eee" stroke="#777" />
          <rect x="0.500" y="5.500" width="15" height="7" fill="#a8adb5" stroke="#666" />
          <rect x="3" y="10" width="10" height="4" fill="#fff" stroke="#666" />
          <rect x="12" y="7" width="2" height="1.500" fill="#19c24a" />
        </svg>
      </Tb>
      <Tb className="ml-[6px] w-[22px]" active>
        <svg width="16" height="15" viewBox="0 0 16 15">
          <rect x="0.500" y="0.500" width="15" height="14" fill="#fff" stroke="#666" />
          <rect x="1" y="1" width="5" height="13" fill="#a9cbe8" />
        </svg>
      </Tb>
      <Tb className="w-[22px]"><ExpandBox size={15} /></Tb>
      <Tb className="w-[24px]"><FilmIcon /></Tb>
      <Grip className="mr-[3px] ml-[5px]" />
      <Tb className="w-[24px]">
        <svg width="17" height="17" viewBox="0 0 17 17">
          <circle cx="7" cy="7" r="5.500" fill="#d6e6f8" stroke="#5f7fa3" />
          <path d="M4 7h6M7 4v6" stroke="#1f4f99" strokeWidth="1.300" />
          <path d="M11 11l5 5" stroke="#c9982f" strokeWidth="2.500" />
        </svg>
      </Tb>
      <Tb className="w-[11px]"><Caret /></Tb>
      <Tb className="w-[22px]">
        <svg width="14" height="14" viewBox="0 0 14 14">
          <circle cx="7" cy="7" r="6" fill="#d7dde8" stroke="#7d8794" />
          <path d="M4 7h6" stroke="#3a5a8c" strokeWidth="1.500" />
        </svg>
      </Tb>
      <Tb className="ml-[2px] w-[48px] justify-start! bg-white pl-[6px]">75%</Tb>
      <Tb className="w-[14px]"><Caret /></Tb>
      <Tb className="w-[22px]">
        <svg width="14" height="14" viewBox="0 0 14 14">
          <circle cx="7" cy="7" r="6" fill="#d7dde8" stroke="#7d8794" />
          <path d="M4 7h6M7 4v6" stroke="#3a5a8c" strokeWidth="1.500" />
        </svg>
      </Tb>
      <Sep className="ml-[4px]" />
      <Tb className="w-[24px]">
        <svg width="16" height="16" viewBox="0 0 16 16">
          <rect x="0.500" y="0.500" width="15" height="15" fill="#6aa878" stroke="#2f6b3c" />
          <rect x="4" y="3" width="8" height="10" fill="#e6f2e8" stroke="#2f6b3c" strokeWidth="0.700" />
          <path d="M8 4.500v7M6.500 6L8 4.500 9.500 6M6.500 10L8 11.500 9.500 10" fill="none" stroke="#234" strokeWidth="0.800" />
        </svg>
      </Tb>
      <Tb className="w-[22px]" active>
        <svg width="16" height="14" viewBox="0 0 16 14">
          <rect x="0.500" y="0.500" width="15" height="13" fill="#eef5ee" stroke="#555" />
          <rect x="1" y="1" width="14" height="3" fill="#5fa86c" />
          <path d="M3 8h10M3 8l2-1.500M3 8l2 1.500M13 8l-2-1.500M13 8l-2 1.500" stroke="#333" fill="none" strokeWidth="0.800" />
        </svg>
      </Tb>
      <Grip className="mr-[3px] ml-[6px]" />
      <Tb className="ml-[2px] w-[22px]" active>
        <svg width="16" height="15" viewBox="0 0 16 15">
          <rect width="16" height="15" fill="#4c9a5c" />
          <rect x="5" y="1" width="10" height="13" fill="#b4d9ba" />
          <path d="M5 5h10M5 9h10" stroke="#2a5d35" />
        </svg>
      </Tb>
      <Sep className="ml-[4px]" />
      <Tb className="w-[24px]"><NavBall d="M5 3.500v8M11 3.500L6.500 7.500 11 11.500z" /></Tb>
      <Tb className="w-[22px]"><NavBall d="M10 3.500L5.500 7.500 10 11.500z" /></Tb>
      <span className="ml-[6px] w-[28px] shrink-0">Page</span>
      <span className="ml-[2px] flex h-[22px] w-[33px] shrink-0 items-center bg-white pl-[2px]">3</span>
      <span className="ml-[5px] w-[28px] shrink-0">of 10</span>
      <Tb className="w-[24px]"><NavBall d="M5 3.500L9.500 7.500 5 11.500z" /></Tb>
      <Tb className="w-[22px]"><NavBall d="M10 3.500v8M4 3.500L8.500 7.500 4 11.500z" /></Tb>
      <Sep className="ml-[4px]" />
      <Tb className="w-[24px]"><NavBall d="M11 7.500H5M7.500 4.500L4.500 7.500l3 3" /></Tb>
      <Tb className="w-[8px]"><Caret /></Tb>
      <Tb className="w-[24px]"><NavBall dim d="M4 7.500h6M7.500 4.500l3 3-3 3" /></Tb>
      <Tb className="w-[8px]"><Caret color="#aaa" /></Tb>
      <Grip className="mx-[2px] ml-[6px]" />
      <Tb className="ml-[2px] w-[26px]"><PageIcon d="M5 2h6v12H5zM6 5h4M6 8h4M6 11h4" /></Tb>
      <Tb className="w-[22px]"><PageIcon d="M4 2h8v5H4zM4 9h8v5H4z" /></Tb>
      <Tb className="w-[22px]"><PageIcon d="M2 3h5v10H2zM9 3h5v10H9z" /></Tb>
      <Tb className="w-[23px]"><PageIcon d="M2 2h5v5H2zM9 2h5v5H9zM2 9h5v5H2zM9 9h5v5H9z" /></Tb>
      <Grip className="mr-[2px] ml-[8px]" />
      <Tb className="ml-[2px] w-[23px]" active>
        <Hand size={17} fill="#f2c14e" color="#7a5a14" strokeWidth={1.6} />
      </Tb>
      <Tb className="w-[22px]">
        <span className="flex h-[16px] w-[16px] items-center justify-center border border-dotted border-[#234] font-['Liberation_Serif',serif] text-[14px] leading-none font-bold text-[#2a4f8f]">A</span>
      </Tb>
      <Tb className="w-[24px]">
        <Binoculars size={17} fill="#b8c9ec" color="#2f4f9f" strokeWidth={2} />
      </Tb>
      <Sep className="ml-[3px]" />
      <span className="ml-[5px] w-[58px] shrink-0 text-[12px] tracking-[-0.1px] whitespace-nowrap">Start page:</span>
      <span className="ml-[3px] flex h-[22px] w-[30px] shrink-0 items-center border border-[#666] bg-white pl-[2px]">1</span>
      <Sep className="ml-[5px]" />
      <span className="ml-[6px] w-[66px] shrink-0 text-[12px] tracking-[-0.1px] whitespace-nowrap">Page layout</span>
      <Sep className="ml-[4px]" />
    </div>
  )
}

// ---------- bottom tabs ----------

function GridIcon() {
  return (
    <svg width="14" height="14" viewBox="0 0 14 14">
      <rect x="0.500" y="0.500" width="13" height="13" fill="#eef2f8" stroke="#9fb4d0" />
      <rect x="1" y="1" width="12" height="3" fill="#6c93cf" />
      <path d="M1 7h12M1 10h12M4.500 4v9M8 4v9M11 4v9" stroke="#b4c4d8" strokeWidth="0.700" />
    </svg>
  )
}

function BottomTabs() {
  const tabs = [
    { t: 'Cross-sections', w: 'w-[119px]' },
    { t: 'Bearings', w: 'w-[88px]' },
    { t: 'Bracing', w: 'w-[81px]' },
    { t: 'Standard Load Cases', w: 'w-[154px]' },
    { t: 'Additional LC', w: 'w-[120px]' },
  ]
  return (
    <div className={`relative flex h-[24px] shrink-0 items-end bg-[#b9cce4] pl-[6px] text-[#222] ${barText} ${ui}`}>
      <div className="flex h-[22px] w-[88px] items-center gap-[9px] rounded-t-[3px] bg-[#f4f9fe] pl-[6px] text-[#111]">
        <GridIcon />
        Segments
      </div>
      <div className="w-[13px] shrink-0" />
      {tabs.map((tab) => (
        <div key={tab.t} className={`flex h-[22px] shrink-0 items-center gap-[9px] whitespace-nowrap ${tab.w}`}>
          <GridIcon />
          {tab.t}
        </div>
      ))}
      <svg width="9" height="9" viewBox="0 0 9 9" className="absolute top-[7px] right-[5px]">
        <path d="M0.500 0.500l8 8M8.500 0.500l-8 8" stroke="#111" strokeWidth="1.500" />
      </svg>
    </div>
  )
}

// ---------- app ----------

export default function App() {
  return (
    <div className="flex h-[900px] w-[1600px] flex-col overflow-hidden bg-[#f0f0f0] font-['Open_Sans',sans-serif]">
      <TitleBar />
      <MenuBar />
      <Ribbon />
      <div className="flex min-h-0 flex-1">
        <PropertiesPanel />
        <div className="flex min-w-0 flex-1 flex-col pl-[2px]">
          <div className={`flex h-[24px] shrink-0 items-end bg-[#b9cce4] pl-[2px] text-[11.5px] text-[#222] ${ui}`}>
            <div className="flex h-[20px] w-[69px] items-center justify-center">Graphics</div>
            <div className="flex h-[20px] w-[116px] items-center justify-center">Calculation values</div>
            <div className="flex h-[20px] w-[66px] items-center justify-center rounded-t-[3px] bg-[#f4f9fe] text-[#111]">Document</div>
          </div>
          <DocToolbar />
          <div className="flex h-[620px] min-h-0 shrink-0">
            <BookmarksPanel />
            <div className="ml-[7px] flex min-w-0 flex-1 flex-col">
              <div className="flex h-[22px] shrink-0 items-center pl-[223px]">
                <HRuler />
              </div>
              <div className="flex h-[580px] shrink-0">
                <VRuler />
                <div className="min-w-0 flex-1 overflow-hidden bg-[#a3a3a3]">
                  <DocPage />
                </div>
                <div className="flex w-[20px] shrink-0 flex-col items-center bg-[#f0f0f0]">
                  <svg width="11" height="7" viewBox="0 0 11 7" className="mt-[6px]">
                    <path d="M1 6l4.500-5L10 6" fill="none" stroke="#333" strokeWidth="1.500" />
                  </svg>
                  <div className="mt-[114px] h-[36px] w-[16px] bg-[#cdcdcd]" />
                  <svg width="11" height="7" viewBox="0 0 11 7" className="mt-auto mb-[6px]">
                    <path d="M1 1l4.500 5L10 1" fill="none" stroke="#333" strokeWidth="1.500" />
                  </svg>
                </div>
              </div>
              <div className="flex h-[18px] shrink-0 items-center justify-between pr-[23px] pl-[20px]">
                <svg width="7" height="11" viewBox="0 0 7 11">
                  <path d="M6 1L1 5.500 6 10" fill="none" stroke="#bbb" strokeWidth="1.500" />
                </svg>
                <svg width="7" height="11" viewBox="0 0 7 11">
                  <path d="M1 1l5 4.500L1 10" fill="none" stroke="#bbb" strokeWidth="1.500" />
                </svg>
              </div>
            </div>
          </div>
          <div className="flex flex-1 items-start justify-end border-t border-[#d8d8d8] pt-[5px] pr-[3px]">
            <svg width="10" height="10" viewBox="0 0 10 10" fill="#999">
              <rect x="7" y="1" width="2" height="2" />
              <rect x="4" y="4" width="2" height="2" />
              <rect x="7" y="4" width="2" height="2" />
              <rect x="1" y="7" width="2" height="2" />
              <rect x="4" y="7" width="2" height="2" />
              <rect x="7" y="7" width="2" height="2" />
            </svg>
          </div>
          <BottomTabs />
        </div>
      </div>
      <div className="h-[22px] shrink-0 border-t border-[#d0d0d0] bg-[#f2f1f0]" />
    </div>
  )
}
